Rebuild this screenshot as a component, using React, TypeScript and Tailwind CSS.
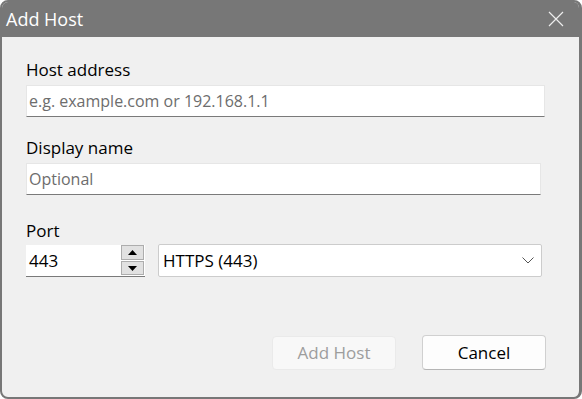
export default function App() {
  return (
    <div className="w-[582px] h-[399px] overflow-hidden rounded-[8px] border-2 border-r-[3px] border-[#777777] bg-[#f0f0f0] font-['Segoe_UI','Open_Sans',sans-serif] text-[17px] text-black flex flex-col">
      {/* title bar */}
      <div className="h-[35px] shrink-0 bg-[#777777] flex items-center justify-between pl-[4px] pr-[15px]">
        <span className="text-[18px] text-white leading-none -mt-[2px]">Add Host</span>
        <svg width="16" height="16" viewBox="0 0 16 16" className="-mt-[1px]">
          <path d="M1 1 L15 15 M15 1 L1 15" stroke="#ededed" strokeWidth="1.2" fill="none" />
        </svg>
      </div>

      <div className="flex flex-col pl-[24px] pt-[21px]">
        <label className="h-[24px] leading-[24px]">Host address</label>
        <div className="mt-[3px] w-[519px] h-[32px] bg-white border border-[#e6e6e6] border-b-[#7a7a7a] flex items-center pl-[2px] text-[16px] text-[#6d6d6d]">
          e.g. example.com or 192.168.1.1
        </div>

        <label className="mt-[19px] h-[24px] leading-[24px]">Display name</label>
        <div className="mt-[3px] w-[515px] h-[32px] bg-white border border-[#e6e6e6] border-b-[#7a7a7a] flex items-center pl-[2px] text-[16px] text-[#6d6d6d]">
          Optional
        </div>

        <label className="mt-[24px] h-[24px] leading-[24px]">Port</label>
        <div className="mt-[1px] flex items-start gap-[13px]">
          <div className="w-[119px] h-[32px] mt-[1px] bg-white border-b border-[#7a7a7a] flex items-center justify-between pl-[3px] pr-[1px]">
            <span>443</span>
            <div className="flex flex-col gap-[1px] -mt-[1px]">
              <div className="w-[23px] h-[15px] bg-[#e1e1e1] border border-[#adadad] flex items-center justify-center">
                <svg width="9" height="5" viewBox="0 0 9 5">
                  <path d="M0 5 L4.5 0 L9 5 Z" fill="#000" />
                </svg>
              </div>
              <div className="w-[23px] h-[14px] bg-[#e1e1e1] border border-[#adadad] flex items-center justify-center">
                <svg width="9" height="5" viewBox="0 0 9 5">
                  <path d="M0 0 L4.5 5 L9 0 Z" fill="#000" />
                </svg>
              </div>
            </div>
          </div>
          <div className="w-[384px] h-[33px] bg-white border border-[#cccccc] rounded-[2px] flex items-center justify-between pl-[4px] pr-[7px]">
            <span>HTTPS (443)</span>
            <svg width="12" height="7" viewBox="0 0 12 7">
              <path d="M0.5 0.5 L6 6 L11.5 0.5" stroke="#555" strokeWidth="1" fill="none" />
            </svg>
          </div>
        </div>
      </div>

      <div className="mt-auto mb-[27px] flex justify-end items-start gap-[26px] pr-[33px]">
        <button className="mt-[1px] w-[124px] h-[34px] rounded-[4px] bg-[#f8f8f8] border border-[#eaeaea] text-[#9d9d9d]">
          Add Host
        </button>
        <button className="w-[124px] h-[35px] rounded-[4px] bg-[#fdfdfd] border border-[#d0d0d0] border-b-[#b5b5b5] text-black">
          Cancel
        </button>
      </div>
    </div>
  );
}
